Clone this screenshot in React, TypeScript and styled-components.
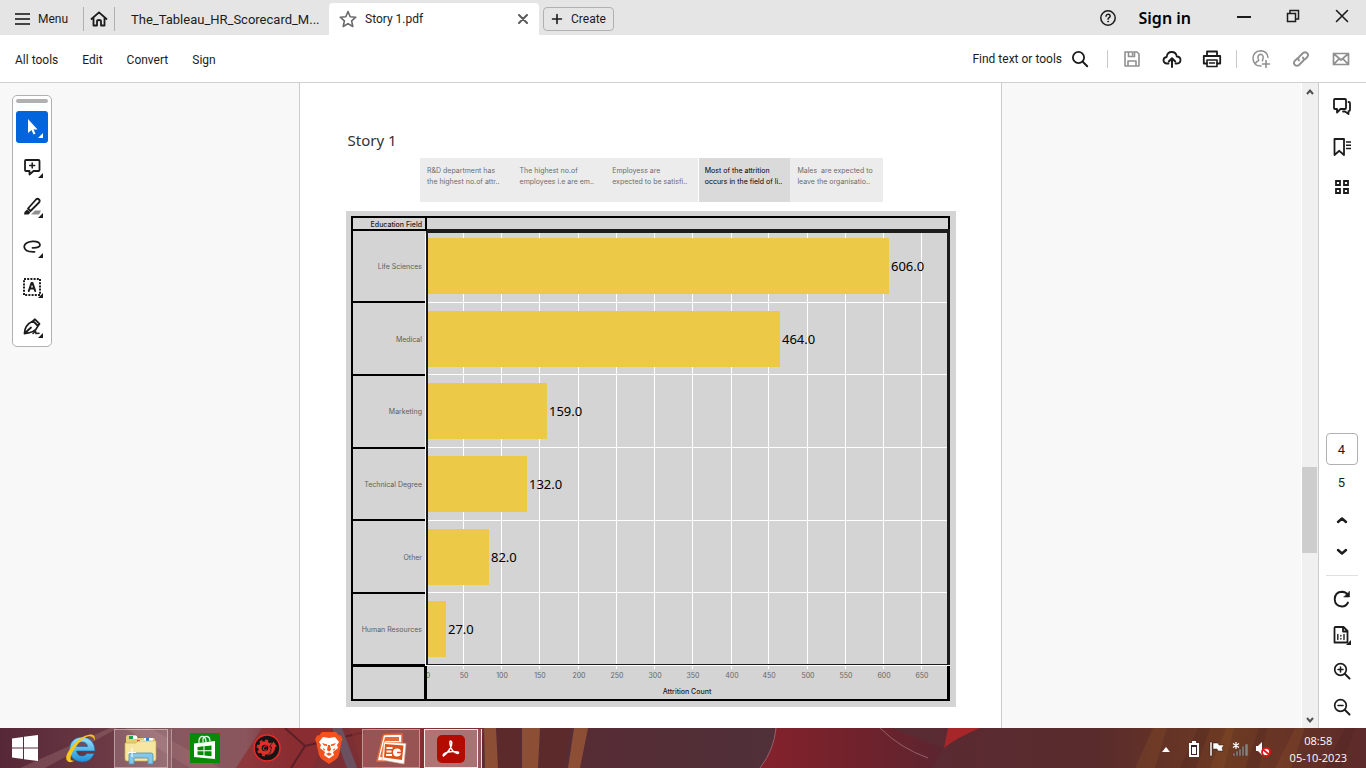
import React from 'react';
import styled, { createGlobalStyle } from 'styled-components';

const UI = "Roboto, 'Liberation Sans', sans-serif";
const DOC = "'Noto Sans', 'Open Sans', sans-serif";
const SMALL = "Inter, 'Noto Sans', sans-serif";

const GlobalStyle = createGlobalStyle`
  * { box-sizing: border-box; }
  body { margin: 0; font-family: ${UI}; font-size: 12px; color: #1c1c1c; background: #f8f8f8; overflow: hidden; }
  button, input { font: inherit; color: inherit; }
  svg { display: block; }
`;

const Window = styled.div`
  display: flex;
  flex-direction: column;
  height: 100vh;
`;

/* Title bar */
const TitleBar = styled.header`
  display: flex;
  align-items: flex-end;
  height: 35px;
  background: #e5e5e5;
`;
const PlainButton = styled.button`
  display: flex;
  align-items: center;
  justify-content: center;
  padding: 0;
  border: 0;
  background: none;
  cursor: pointer;
`;
const MenuButton = styled(PlainButton)`
  gap: 7px;
  width: 83px;
  height: 32px;
  padding-left: 15px;
  justify-content: flex-start;
`;
const HomeButton = styled(PlainButton)`
  width: 32px;
  height: 24px;
  margin-bottom: 4px;
  border: solid #b1b1b1;
  border-width: 0 1px;
`;
const Tab = styled.div<{ $active?: boolean }>`
  display: flex;
  align-items: center;
  gap: 8px;
  width: ${p => (p.$active ? 210 : 214)}px;
  height: 32px;
  padding: 0 11px 0 ${p => (p.$active ? 10 : 16)}px;
  border-radius: 4px 4px 0 0;
  background: ${p => (p.$active ? '#fff' : 'none')};
  font-size: ${p => (p.$active ? 12 : 13)}px;
`;
const TabName = styled.button`
  flex: 1;
  min-width: 0;
  padding: 0;
  border: 0;
  background: none;
  text-align: left;
  white-space: nowrap;
`;
const CreateButton = styled(PlainButton)`
  gap: 8px;
  width: 71px;
  height: 24px;
  margin: 0 0 4px 4px;
  border: 1px solid #b1b1b1;
  border-radius: 4px;
`;
const WindowActions = styled.div`
  display: flex;
  align-items: center;
  height: 35px;
  margin-left: auto;
  padding-right: 15px;
`;
const SignIn = styled(PlainButton)`
  margin: 0 44px 0 22px;
  font-family: ${DOC};
  font-size: 16px;
  font-weight: 600;
  color: #000;
`;
const Caption = styled(PlainButton)`
  width: 18px;
  height: 24px;
  margin-bottom: 3px;
  & + & { margin-left: 31px; }
`;

/* Toolbar */
const Toolbar = styled.div`
  display: flex;
  align-items: center;
  height: 48px;
  padding: 0 15px;
  background: #fff;
  border-bottom: 1px solid #d0d0d0;
`;
const ToolNav = styled.nav`
  display: flex;
  gap: 24px;
  padding-top: 2px;
`;
const ToolActions = styled.div`
  display: flex;
  align-items: center;
  margin-left: auto;
`;
const FindButton = styled(PlainButton)`
  gap: 9px;
  padding-right: 18px;
`;
const IconGroup = styled.div`
  display: flex;
  gap: 20px;
  padding: 0 14px;
  border-left: 1px solid #c8c8c8;
  &:last-child { padding-right: 0; }
`;
const IconButton = styled(PlainButton)<{ $muted?: boolean }>`
  width: 20px;
  height: 18px;
  color: ${p => (p.$muted ? '#909090' : '#1c1c1c')};
`;

/* Workspace */
const Workspace = styled.div`
  position: relative;
  display: flex;
  flex: 1;
  min-height: 0;
`;
const Viewer = styled.main`
  display: flex;
  flex: 1;
  justify-content: center;
  min-width: 0;
  background: #f8f8f8;
`;
const Page = styled.article`
  display: flex;
  flex-direction: column;
  align-items: center;
  width: 703px;
  padding-top: 46px;
  background: #fff;
  border: solid #ccc;
  border-width: 0 1px;
  font-family: ${DOC};
`;
const StoryTitle = styled.h1`
  width: 610px;
  margin: 0;
  padding-left: 2px;
  font-size: 15px;
  line-height: 22px;
  font-weight: 400;
  color: #333;
`;
const StoryNav = styled.div`
  display: flex;
  width: 463px;
  height: 44px;
  margin: 7px 0 9px 2px;
`;
const StoryPoint = styled.button<{ $active?: boolean }>`
  flex: 1;
  min-width: 0;
  padding: 7px 0 0 ${p => (p.$active ? 6 : 7)}px;
  border: 0;
  border-left: ${p => (p.$active ? '1px solid #fff' : '0')};
  background: ${p => (p.$active ? '#dadada' : '#ececec')};
  color: ${p => (p.$active ? '#000' : '#6c6c6c')};
  display: flex;
  flex-direction: column;
  font-family: ${SMALL};
  font-size: 7px;
  line-height: 11px;
  text-align: left;
  white-space: pre;
`;

const Palette = styled.div`
  position: absolute;
  top: 12px;
  left: 12px;
  display: flex;
  flex-direction: column;
  align-items: center;
  gap: 8px;
  width: 40px;
  padding: 3px 0;
  background: #fff;
  border: 1px solid #b1b1b1;
  border-radius: 5px;
`;
const Grip = styled.div`
  width: 32px;
  height: 4px;
  border-radius: 2px;
  background: #b1b1b1;
`;
const PaletteButton = styled(PlainButton)<{ $active?: boolean }>`
  width: 32px;
  height: 32px;
  border-radius: 3px;
  background: ${p => (p.$active ? '#0265dc' : 'none')};
  color: ${p => (p.$active ? '#fff' : '#1c1c1c')};
`;

const Scrollbar = styled.div`
  display: flex;
  flex-direction: column;
  align-items: center;
  justify-content: space-between;
  width: 17px;
  padding: 4px 1px 3px 0;
  background: #f0f0f0;
  border-left: 1px solid #fff;
  color: #505050;
`;
const Track = styled.div`
  display: flex;
  flex: 1;
  flex-direction: column;
  width: 100%;
`;
const Before = styled.div`flex: 370;`;
const Thumb = styled.div`flex: 86; background: #cdcdcd;`;
const After = styled.div`flex: 162;`;

const Rail = styled.aside`
  display: flex;
  flex-direction: column;
  align-items: center;
  width: 48px;
  padding: 15px 2px 12px 0;
  background: #fff;
  border-left: 1px solid #ccc;
`;
const RailGroup = styled.div<{ $gap: number; $last?: boolean }>`
  display: flex;
  flex-direction: column;
  align-items: center;
  gap: ${p => p.$gap}px;
  margin-bottom: ${p => (p.$last ? 0 : 'auto')};
`;
const PagerGroup = styled.div`
  display: flex;
  flex-direction: column;
  align-items: center;
  gap: 14px;
  margin-bottom: 14px;
`;
const PageInput = styled.input`
  width: 32px;
  height: 32px;
  padding: 0;
  border: 1px solid #b1b1b1;
  border-radius: 4px;
  background: #fff;
  font-size: 13px;
  text-align: center;
`;
const PageTotal = styled.span`
  margin: -6px 0 4px;
  font-size: 13px;
  line-height: 20px;
`;
const RailRule = styled.hr`
  width: 32px;
  margin: 0;
  border: 0;
  border-top: 1px solid #e0e0e0;
`;

/* Taskbar */
const Taskbar = styled.footer`
  position: relative;
  display: flex;
  height: 40px;
  background: #53292f;
  color: #fff;
`;
const Wallpaper = styled.svg`
  position: absolute;
  inset: 0;
  width: 100%;
  height: 100%;
`;
const Apps = styled.div`
  position: relative;
  display: flex;
`;
const AppButton = styled(PlainButton)<{ $w?: number }>`
  width: ${p => p.$w ?? 62}px;
  height: 40px;
`;
const OpenApp = styled(AppButton)<{ $lit?: boolean; $single?: boolean }>`
  width: ${p => (p.$single ? 58 : 54)}px;
  height: 39px;
  margin: 1px ${p => (p.$single ? 2 : 6)}px 0 2px;
  border: 1px solid ${p => (p.$lit ? 'rgba(255,255,255,.85)' : 'rgba(255,255,255,.4)')};
  background: ${p => (p.$lit ? 'rgba(255,235,235,.36)' : 'rgba(255,240,240,.18)')};
  box-shadow: ${p => (p.$single ? 'none' : p.$lit ? '3px 0 0 #94565a, 4px 0 0 #f0dede' : '3px 0 0 #8d6266, 4px 0 0 #b89599')};
`;
const Tray = styled.div`
  position: relative;
  display: flex;
  align-items: center;
  margin-left: auto;
  padding-right: 19px;
`;
const TrayButton = styled(PlainButton)`
  width: 18px;
  height: 40px;
  padding-top: 2px;
  margin-right: 5px;
  &:first-child { margin-right: 10px; }
`;
const Clock = styled.time`
  margin-left: 13px;
  padding-top: 2px;
  font-family: 'Open Sans', sans-serif;
  font-size: 11px;
  line-height: 17px;
  text-align: center;
`;

const rows = [
  { name: 'Life Sciences', label: '606.0', y: 27, end: 543 },
  { name: 'Medical', label: '464.0', y: 100, end: 434 },
  { name: 'Marketing', label: '159.0', y: 172, end: 201 },
  { name: 'Technical Degree', label: '132.0', y: 245, end: 181 },
  { name: 'Other', label: '82.0', y: 318, end: 143 },
  { name: 'Human Resources', label: '27.0', y: 390, end: 100 },
];
const gridX = [117, 155, 193, 232, 270, 308, 346, 385, 422, 461, 499, 537, 575];
const rules = [
  { head: 90, plot: 91 },
  { head: 163, plot: 163 },
  { head: 236, plot: 236 },
  { head: 308, plot: 309 },
  { head: 381, plot: 381 },
];

function AttritionChart() {
  return (
    <svg width="610" height="496" viewBox="0 0 610 496" fontFamily={SMALL} fontSize="7" role="img" aria-label="Attrition Count by Education Field">
      <rect width="610" height="496" fill="#d4d4d4" />
      {gridX.map((x, i) => (
        <g key={x}>
          <rect x={x} y="22" width="1" height="436" fill="#fff" />
          <text x={x + 1} y="467" textAnchor="middle" fill="#666">{(i + 1) * 50}</text>
        </g>
      ))}
      <text x="82" y="467" textAnchor="middle" fill="#666">0</text>
      {rules.map(r => (
        <g key={r.head}>
          <rect x="82" y={r.plot} width="519" height="1" fill="#fff" />
          <rect x="7" y={r.head} width="72" height="2" fill="#000" />
        </g>
      ))}
      <rect x="7" y="18" width="72" height="2" fill="#000" />
      <rect x="79" y="22" width="1" height="433" fill="#fff" />
      <rect x="80" y="18" width="524" height="4" fill="#1c1c1c" />
      <rect x="80" y="22" width="2" height="432" fill="#1c1c1c" />
      <rect x="601" y="22" width="3" height="432" fill="#1c1c1c" />
      <rect x="80" y="453" width="524" height="1" fill="#1c1c1c" />
      <rect x="80" y="454" width="524" height="1" fill="#fff" />
      <rect x="5" y="5" width="599" height="2" fill="#000" />
      <rect x="5" y="5" width="2" height="485" fill="#000" />
      <rect x="5" y="488" width="599" height="2" fill="#000" />
      <rect x="602" y="5" width="2" height="13" fill="#000" />
      <rect x="601" y="455" width="3" height="35" fill="#000" />
      <rect x="79" y="5" width="2" height="15" fill="#000" />
      <rect x="78" y="455" width="3" height="35" fill="#000" />
      <rect x="5" y="453" width="74" height="3" fill="#000" />
      {rows.map(r => (
        <g key={r.name}>
          <rect x="82" y={r.y} width={r.end - 82} height="56" fill="#ecc946" />
          <text x="76" y={r.y + 31} textAnchor="end" fill="#606060">{r.name}</text>
          <text x={r.end + 2} y={r.y + 33} fontFamily={DOC} fontSize="13" fill="#000">{r.label}</text>
        </g>
      ))}
      <text x="76" y="16" textAnchor="end" fontWeight="500" fill="#222">Education Field</text>
      <text x="341" y="483" textAnchor="middle" fontWeight="500" fill="#222">Attrition Count</text>
    </svg>
  );
}

type IconProps = { w?: number; h?: number; children: React.ReactNode };
const Icon = ({ w = 18, h = 18, children }: IconProps) => (
  <svg width={w} height={h} viewBox={`0 0 ${w} ${h}`} fill="none" stroke="currentColor" strokeWidth={2} strokeLinejoin="round" strokeLinecap="round" aria-hidden="true">
    {children}
  </svg>
);
const Corner = () => <path d="M27 22v5h-5z" fill="currentColor" stroke="none" />;

const paletteTools: { label: string; art: React.ReactNode }[] = [
  { label: 'Select', art: <path d="M12 8v14l3.5-3 2 4.500 2-1-2-4h4z" fill="currentColor" stroke="none" /> },
  {
    label: 'Add a comment',
    art: <><path d="M10 9h12.500q1 0 1 1v9q0 1-1 1h-5l-4 3.500V20H10q-1 0-1-1v-9q0-1 1-1z" strokeWidth="1.800" /><path d="M16.200 12v5M13.700 14.500h5" strokeWidth="1.500" /></>,
  },
  {
    label: 'Highlight',
    art: <><path d="M15 23.500h8l2-4h-6z" fill="#909090" stroke="none" /><path d="M12 17.500l8-9q1.500-1.500 3 0t0 3l-8.500 8.500z" strokeWidth="1.800" /><path d="M11 18.500l3.500 3-2 2H8q0-3 3-5z" fill="currentColor" stroke="none" /></>,
  },
  { label: 'Draw', art: <path d="M16.500 16.800q7.500.2 7.500-3Q23.500 10 16.500 10.300 8.500 11 8.200 15.800 8.500 21.200 18.500 20.800" strokeWidth="1.800" /> },
  {
    label: 'Text box',
    art: <><rect x="8" y="8" width="16" height="16" strokeDasharray="2 1.200" strokeLinecap="butt" strokeWidth="2" /><path d="M12.800 20l2.700-8h1l2.700 8M14 17.500h4" strokeWidth="2" /></>,
  },
  {
    label: 'Fill and sign',
    art: <><path d="M8.500 22.500Q8.500 14 17 10l5 5q-3 7-13.500 7.500zM17 10l2-1.700 4.500 4.500L22 15M9 22l6-5.500" strokeWidth="1.800" /><path d="M17 22.500l2.500-2.500.5 2.500 3-.2" strokeWidth="1.500" /></>,
  },
];

export default function App() {
  return (
    <Window>
      <GlobalStyle />
      <TitleBar>
        <MenuButton>
          <Icon w={16} h={14}><path d="M0 2h15M0 7h15M0 12h15" stroke="#444" strokeWidth="2" strokeLinecap="butt" /></Icon>
          Menu
        </MenuButton>
        <HomeButton aria-label="Home">
          <Icon w={18} h={16}><path d="M1.500 8L9 1.300 16.500 8M3.500 7v7.500H7V10.500q0-1.500 2-1.500t2 1.500v4h3.500V7" strokeWidth="1.800" /></Icon>
        </HomeButton>
        <Tab><TabName>The_Tableau_HR_Scorecard_M...</TabName></Tab>
        <Tab $active>
          <Icon w={18} h={18}><path d="M9 1.500l2.200 5.200 5.600.5-4.200 3.700 1.200 5.600L9 13.600l-4.800 2.900 1.200-5.600-4.200-3.700 5.600-.5z" stroke="#6a6a6a" strokeWidth="1.600" /></Icon>
          <TabName>Story 1.pdf</TabName>
          <PlainButton aria-label="Close tab"><Icon w={10} h={10}><path d="M1 1l8 8M9 1L1 9" stroke="#5c5c5c" /></Icon></PlainButton>
        </Tab>
        <CreateButton>
          <Icon w={12} h={12}><path d="M6 1.500v9M1.500 6h9" strokeWidth="1.600" /></Icon>
          Create
        </CreateButton>
        <WindowActions>
          <PlainButton aria-label="Help">
            <Icon w={18} h={18}><circle cx="9" cy="9" r="7.200" strokeWidth="1.500" /><path d="M7 7.200q.3-1.900 2.200-1.900T11.200 7q0 1-1.100 1.700T9.100 10.200" strokeWidth="1.500" /><circle cx="9.100" cy="12.500" r=".5" strokeWidth="1" /></Icon>
          </PlainButton>
          <SignIn>Sign in</SignIn>
          <Caption aria-label="Minimize"><Icon w={14} h={12}><path d="M0 7h14" strokeLinecap="butt" /></Icon></Caption>
          <Caption aria-label="Restore"><Icon w={14} h={14}><path d="M1.500 4.500h8v8h-8zM4 4V1.500h8.500v8.500H10" strokeWidth="1.500" strokeLinejoin="miter" /></Icon></Caption>
          <Caption aria-label="Close"><Icon w={14} h={14}><path d="M1.500 1.500l11 11M12.500 1.500l-11 11" strokeWidth="1.600" /></Icon></Caption>
        </WindowActions>
      </TitleBar>

      <Toolbar>
        <ToolNav>
          {['All tools', 'Edit', 'Convert', 'Sign'].map(t => <PlainButton key={t}>{t}</PlainButton>)}
        </ToolNav>
        <ToolActions>
          <FindButton>
            Find text or tools
            <Icon w={18} h={18}><circle cx="7.500" cy="7.500" r="5.600" strokeWidth="1.800" /><path d="M11.800 11.800L16.200 16.200" /></Icon>
          </FindButton>
          <IconGroup>
            <IconButton $muted aria-label="Save"><Icon><path d="M2 2h12l2 2v12H2zM5.500 2v4.500h6V2M5 16v-5h8v5M9.500 3.500v1.500" strokeWidth="1.600" /></Icon></IconButton>
            <IconButton aria-label="Upload"><Icon w={20} h={18}><path d="M6.500 13.500H4.500Q1.500 13 1.500 10.200T4.700 7Q5.200 2 9.700 2t5 4.500q3.800.2 3.800 3.500t-3.500 3.500h-1.500" strokeWidth="1.800" /><path d="M10 17V8.500M6.800 11.500L10 8.300l3.200 3.200" /></Icon></IconButton>
            <IconButton aria-label="Print"><Icon w={20} h={18}><path d="M5 5.500V1.500h10v4M5 13.500H1.800V6h16.400v7.500H15" strokeWidth="1.800" /><path d="M5 10h10v6.500H5zM7.500 13h5" strokeWidth="1.600" /></Icon></IconButton>
          </IconGroup>
          <IconGroup>
            <IconButton $muted aria-label="Share"><Icon w={20} h={20}><path d="M10 17Q2.500 17 2 9.500 2.500 2 9.500 1.700 16.500 2 17 8.500M4.500 14.500q1-2.500 3-2.700.5-.8-.3-2-1-3.500 2.200-4.500 3.300.5 2.700 4-.8 1.500-.6 2.500" strokeWidth="1.500" /><path d="M15 11.500v7M11.500 15h7" strokeWidth="1.600" /></Icon></IconButton>
            <IconButton $muted aria-label="Copy link"><Icon w={18} h={18}><path d="M7 10.500q-1.500-2 0-3.500l4-4q2-1.700 4 0t.3 4l-2.600 2.600M11 7.500q1.500 2 0 3.500l-4 4q-2 1.700-4 0t-.3-4L5.300 8.400" strokeWidth="1.900" /></Icon></IconButton>
            <IconButton $muted aria-label="Email"><Icon w={18} h={14}><path d="M1.500 1.500h15v11h-15zM1.500 1.500L9 8l7.500-6.500M1.500 12.500L7 6.800M16.500 12.500L11 6.800" strokeWidth="1.700" /></Icon></IconButton>
          </IconGroup>
        </ToolActions>
      </Toolbar>

      <Workspace>
        <Viewer>
          <Page>
            <StoryTitle>Story 1</StoryTitle>
            <StoryNav>
              <StoryPoint><span>R&amp;D department has</span><span>the highest no.of attr..</span></StoryPoint>
              <StoryPoint><span>The highest no.of</span><span>employees i.e are em..</span></StoryPoint>
              <StoryPoint><span>Employess are</span><span>expected to be satisfi..</span></StoryPoint>
              <StoryPoint $active><span>Most of the attrition</span><span>occurs in the field of li..</span></StoryPoint>
              <StoryPoint><span>{'Males  are expected to'}</span><span>leave the organisatio..</span></StoryPoint>
            </StoryNav>
            <AttritionChart />
          </Page>
        </Viewer>
        <Scrollbar>
          <Icon w={10} h={10}><path d="M2 7l3-3.500L8 7" strokeLinecap="butt" strokeLinejoin="miter" /></Icon>
          <Track><Before /><Thumb /><After /></Track>
          <Icon w={10} h={10}><path d="M2 3l3 3.500L8 3" strokeLinecap="butt" strokeLinejoin="miter" /></Icon>
        </Scrollbar>
        <Rail>
          <RailGroup $gap={22}>
            <IconButton aria-label="Comments"><Icon w={20} h={20}><path d="M3 2h10q1 0 1 1v8q0 1-1 1H8.500L5 15.500V12H3q-1 0-1-1V3q0-1 1-1z" strokeWidth="1.800" /><path d="M16.500 5q1.500 0 1.500 1v7q0 1-1.500 1.200V17L13 14.500h-2" strokeWidth="1.800" /></Icon></IconButton>
            <IconButton aria-label="Bookmarks"><Icon w={20} h={20}><path d="M2.500 2h9.500v16l-4.700-4.200L2.500 18z" strokeWidth="1.800" /><path d="M14 5h5M14 8.200h5M14 11.500h5" strokeWidth="1.600" strokeLinecap="butt" /></Icon></IconButton>
            <IconButton aria-label="Pages"><Icon w={18} h={18}><path d="M3 3h4v4H3zM11 3h4v4h-4zM3 11h4v4H3zM11 11h4v4h-4z" strokeWidth="1.800" strokeLinejoin="miter" /></Icon></IconButton>
          </RailGroup>
          <PagerGroup>
            <PageInput aria-label="Page number" defaultValue="4" />
            <PageTotal>5</PageTotal>
            <IconButton aria-label="Previous page"><Icon w={14} h={10}><path d="M3 7l4-3.500L11 7" strokeWidth="2.400" /></Icon></IconButton>
            <IconButton aria-label="Next page"><Icon w={14} h={10}><path d="M3 3l4 3.500L11 3" strokeWidth="2.400" /></Icon></IconButton>
            <RailRule />
          </PagerGroup>
          <RailGroup $gap={18} $last>
            <IconButton aria-label="Rotate"><Icon w={18} h={18}><path d="M15 12.500q-2 4-6 4Q2 16 1.700 9.200 2 2 9 1.800q4 .2 6 3.500" strokeWidth="1.900" /><path d="M16.500 1.500v5.500H11z" fill="currentColor" strokeWidth=".6" /></Icon></IconButton>
            <IconButton aria-label="Page display"><Icon w={20} h={20}><path d="M3.500 2h8l4 4v11.500h-13V3q0-1 1-1zM11 2v4.500h4.500" strokeWidth="1.800" /><path d="M5.800 9.500v5M12 9.500v5M8.900 10.500v.6M8.900 13.400v.6" strokeWidth="1.400" /><path d="M19 15v5h-5z" fill="currentColor" stroke="none" /></Icon></IconButton>
            <IconButton aria-label="Zoom in"><Icon w={18} h={18}><circle cx="7.500" cy="7.500" r="5.800" strokeWidth="1.700" /><path d="M12 12l4.500 4.500" /><path d="M7.500 5v5M5 7.500h5" strokeWidth="1.600" /></Icon></IconButton>
            <IconButton aria-label="Zoom out"><Icon w={18} h={18}><circle cx="7.500" cy="7.500" r="5.800" strokeWidth="1.700" /><path d="M12 12l4.500 4.500" /><path d="M5 7.500h5" strokeWidth="1.600" /></Icon></IconButton>
          </RailGroup>
        </Rail>
        <Palette role="toolbar" aria-label="Quick tools">
          <Grip />
          {paletteTools.map((t, i) => (
            <PaletteButton key={t.label} $active={i === 0} aria-label={t.label}>
              <Icon w={32} h={32}>{t.art}<Corner /></Icon>
            </PaletteButton>
          ))}
        </Palette>
      </Workspace>

      <Taskbar>
        <Wallpaper viewBox="0 0 1366 40" preserveAspectRatio="none" aria-hidden="true">
          <defs>
            <linearGradient id="wall" x1="0" x2="1" y1="0" y2="0">
              <stop offset="0" stopColor="#562737" /><stop offset=".08" stopColor="#6b3a45" />
              <stop offset=".13" stopColor="#86585f" /><stop offset=".18" stopColor="#8a555c" />
              <stop offset=".21" stopColor="#7c3037" /><stop offset=".32" stopColor="#7a2f31" />
              <stop offset=".36" stopColor="#5a2a32" /><stop offset=".56" stopColor="#503039" />
              <stop offset=".7" stopColor="#5a2a31" /><stop offset=".8" stopColor="#592b2c" />
              <stop offset=".9" stopColor="#6d3a22" /><stop offset="1" stopColor="#5d2a2b" />
            </linearGradient>
            <linearGradient id="red" x1="0" x2="1" y1="0" y2="0">
              <stop offset="0" stopColor="#84222c" /><stop offset=".6" stopColor="#6e222c" /><stop offset="1" stopColor="#5b2630" />
            </linearGradient>
          </defs>
          <rect width="1366" height="40" fill="url(#wall)" />
          <path d="M20 40L110 0h8L45 40zM150 0l70 40h-30L125 0z" fill="#a5777c" opacity=".35" />
          <path d="M236 40L262 0h70l-20 40z" fill="#8f2c2f" opacity=".7" />
          <path d="M285 0l20 18 60-14M305 18l-14 22" stroke="#5b2028" strokeWidth="2" fill="none" />
          <path d="M332 0l15 40h10L342 0z" fill="#6b5060" />
          <path d="M350 0h135l-10 40H362z" fill="#8a332f" opacity=".5" />
          <path d="M484 0h12l2 40h-13zM522 0h18l-2 40h-16zM574 0h14l-8 40h-12z" fill="#8d4e36" />
          <path d="M498 0h22v40h-22zM542 0h28l-6 40h-24z" fill="#5d2a2c" />
          <path d="M776 0h115l52 20-10 20H760q14-18 16-40z" fill="url(#red)" />
          <path d="M776 0q-2 22-16 40M880 0q20 20 48 30" stroke="#95606a" fill="none" />
          <path d="M948 0h32q-24 10-36 20z" fill="#a7262a" />
          <path d="M1135 40l18-40h14l-12 40zM1210 40l16-40h8l-10 40zM1275 40l20-40h10l-14 40z" fill="#a5652b" opacity=".18" />
          <path d="M1180 40l18-40h12l-14 40zM1245 40l14-40h8l-8 40zM1325 40l20-40h10l-14 40z" fill="#45201f" opacity=".25" />
        </Wallpaper>
        <Apps>
          <AppButton $w={50} aria-label="Start">
            <svg width="26" height="26" viewBox="0 0 26 26"><path d="M0 3.500L11 2v10.500H0zM12 1.800L26 0v12.500H12zM0 13.500h11V24L0 22.500zM12 13.500h14V26l-14-1.800z" fill="#fff" /></svg>
          </AppButton>
          <AppButton aria-label="Internet Explorer">
            <svg width="32" height="32" viewBox="0 0 32 32">
              <defs><linearGradient id="ie" x1="0" x2="0" y1="0" y2="1"><stop offset="0" stopColor="#9be4fb" /><stop offset="1" stopColor="#1d8fd8" /></linearGradient></defs>
              <path d="M30 19H11.500q.8 5 5.500 5 3.500 0 4.800-2.500h7.400Q26 30 17 30 5 29 4.500 17.500 5 6 17 5q12.500 1 13 14zM11.500 14.500h11q-.6-4.500-5.500-4.500t-5.500 4.500z" fill="url(#ie)" stroke="#1568a8" strokeWidth=".6" />
              <path d="M29.500 9Q31 2 25 2.500 15 4 6.500 15T3 29.500q2 2 7-1-4 1-4.500-1.500Q5.500 21 13 12T26 4.500q3 .5 3.500 4.500z" fill="#f8c61c" />
            </svg>
          </AppButton>
          <OpenApp aria-label="File Explorer">
            <svg width="34" height="32" viewBox="0 0 34 32">
              <path d="M2 4q0-2 2-2h8l2 3h15q2 0 2 2v20H2z" fill="#e5cd7a" />
              <path d="M5 3h4v3H5z" fill="#16a34a" /><path d="M9 3h4v3H9zM20 5h9v3h-9zM13 7h9v3h-9z" fill="#fff" />
              <path d="M13 7h3v3h-3z" fill="#d73a35" /><path d="M22 5h3v3h-3z" fill="#2b83d5" />
              <path d="M1 10h11l2-2h18v18q0 2-2 2H3q-2 0-2-2z" fill="#f7e6a1" stroke="#c9a94e" strokeWidth=".7" />
              <path d="M5 31V22q0-2 2-2h20q2 0 2 2v9h-5v-6H10v6z" fill="#87c6e6" stroke="#4b93bb" strokeWidth=".8" />
              <path d="M8 15v9M4 19.500h8" stroke="#fff" strokeWidth="1" />
            </svg>
          </OpenApp>
          <AppButton aria-label="Store">
            <svg width="30" height="30" viewBox="0 0 30 30"><path d="M0 0h30v30H0z" fill="#088a08" /><path d="M4 10.500l21-2.500v18L4 24z" fill="#fff" /><path d="M9 10V7q1-4 4-3.500 3 .5 3 6M13 9V6q1-3 4-2.500t3 5" fill="none" stroke="#dff0df" strokeWidth="1.300" /><path d="M7.500 14l6-.7v4H7.500zM14.500 13.200l7-.8v4.900h-7zM7.500 18.300h6v4l-6-.6zM14.500 18.300h7v4.900l-7-.8z" fill="#088a08" /></svg>
          </AppButton>
          <AppButton aria-label="Game Booster">
            <svg width="30" height="30" viewBox="0 0 30 30"><circle cx="15" cy="15" r="13" fill="#151515" stroke="#e52b25" strokeWidth="1.600" /><circle cx="13" cy="15" r="5" fill="none" stroke="#e0302a" strokeWidth="3.400" /><circle cx="13" cy="15" r="7.400" fill="none" stroke="#e0302a" strokeWidth="2" strokeDasharray="3 2.810" /><path d="M21.500 8l4 6h-2q0 7-8 8.500 4-3 4-8.500h-2z" fill="#e0302a" stroke="#151515" strokeWidth=".7" /><path d="M15 13q-3-1-3.500 2t3.500 2" stroke="#e0302a" fill="none" /></svg>
          </AppButton>
          <AppButton aria-label="Brave">
            <svg width="28" height="32" viewBox="0 0 28 32"><path d="M7 0h14l3 3.500h2l1.500 4-1 2L24 23q-1 3-4 5l-6 4-6-4q-3-2-4-5L1 9.500l-1-2 2-4h2z" fill="#f4511e" /><path d="M8 5l6 1 6-1 4 5-2 3 1 3-5 4 1 3-5 3.500L9 23l1-3-5-4 1-3-2-3z" fill="#fff" /><path d="M7 11l5 1.500v1.500l-3-.5zM21 11l-5 1.500v1.500l3-.5zM13 13h2l1 5-2 1.500-2-1.500zM11 22l3-1.500 3 1.500-3 2zM8 16l2.500 2-2 .5zM20 16l-2.500 2 2 .5z" fill="#f4511e" /></svg>
          </AppButton>
          <OpenApp $single aria-label="PowerPoint">
            <svg width="32" height="32" viewBox="0 0 32 32"><path d="M8 3q.5-1.500 2-1.500L27 1v9H10v18H2z" fill="#fff" stroke="#e2683a" strokeWidth="1.500" /><path d="M10 4h14v4H11q-2 0-2 3v13H5z" fill="#e86a38" /><path d="M9 9l22 1.500L29 31 7 27z" fill="#fff" stroke="#e8a284" strokeWidth=".7" /><path d="M10 11l18.500 1.500L27 27 9 24.500z" fill="#d9541e" /><path d="M11.500 15h6M11.500 18.500h5M11 22h6" stroke="#fff" strokeWidth="1.800" /><circle cx="22" cy="19.500" r="4" fill="#fff" /><path d="M22 19.500h4" stroke="#d9541e" strokeWidth="1.500" /></svg>
          </OpenApp>
          <OpenApp $lit aria-label="Acrobat">
            <svg width="28" height="28" viewBox="0 0 28 28"><rect width="28" height="28" rx="5" fill="#b30b00" /><path d="M13.500 6q1.800 0 1 4-1 5-8 11-1-1 1-2.500 5-3 13.500-1.500 1.500 1-.5 1.500Q14 17 13 9q-.3-3 .5-3z" fill="none" stroke="#fff" strokeWidth="1.500" /></svg>
          </OpenApp>
        </Apps>
        <Tray>
          <TrayButton aria-label="Show hidden icons"><svg width="8" height="5" viewBox="0 0 8 5"><path d="M4 0l4 5H0z" fill="#fff" /></svg></TrayButton>
          <TrayButton aria-label="Battery"><svg width="10" height="16" viewBox="0 0 10 16"><path d="M3 0h4v2h3v14H0V2h3z" fill="#fff" /><path d="M2 4h6v10H2z" fill="#3a2020" /><path d="M3 6h4v7H3z" fill="#fff" /></svg></TrayButton>
          <TrayButton aria-label="Action Center"><svg width="16" height="16" viewBox="0 0 16 16"><path d="M1 1h2v14H1zM4 2h5l1 2h5l-2 3 1 3H9L8 8H4z" fill="#fff" stroke="#2a1717" strokeWidth=".5" /></svg></TrayButton>
          <TrayButton aria-label="Network"><svg width="16" height="14" viewBox="0 0 16 14"><path d="M1 11h2v3H1zM4 9h2v5H4zM7 7h2v7H7zM10 4h2v10h-2zM13 2h3v12h-3z" fill="#8d8280" stroke="#443430" strokeWidth=".5" /><path d="M4 0v7M1 1.500l6 4M7 1.500l-6 4" stroke="#fff" strokeWidth="1.200" /></svg></TrayButton>
          <TrayButton aria-label="Volume muted"><svg width="16" height="16" viewBox="0 0 16 16"><path d="M1 5h2l4-4v13l-4-4H1z" fill="#fff" /><circle cx="11" cy="11" r="4" fill="#fff" stroke="#e01515" strokeWidth="1.800" /><path d="M8 8.500l6 5" stroke="#e01515" strokeWidth="1.800" /></svg></TrayButton>
          <Clock>08:58<br />05-10-2023</Clock>
        </Tray>
      </Taskbar>
    </Window>
  );
}
